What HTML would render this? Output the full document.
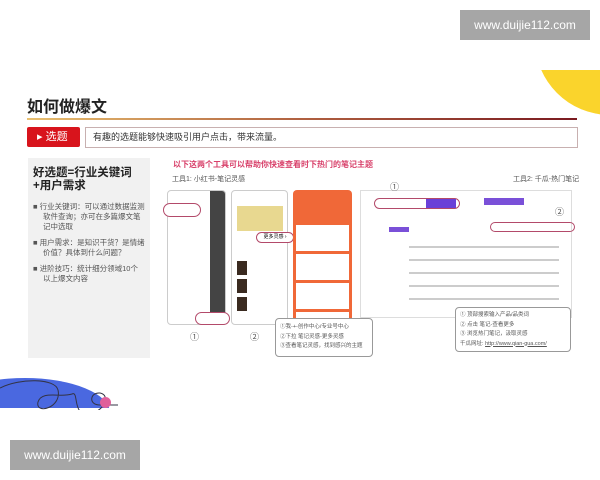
<!DOCTYPE html><html><head><meta charset="utf-8"><style>
*{margin:0;padding:0;box-sizing:border-box}
body{width:600px;height:480px;background:#fff;position:relative;overflow:hidden;font-family:"Liberation Sans","Noto Sans CJK SC",sans-serif}
.a{position:absolute}
.wm{background:#a6a6a6;color:#fff;font-size:12px;text-align:center;line-height:30px;z-index:5}
.s{font-size:5.5px;color:#555;line-height:9.5px;white-space:nowrap}
.ov{border:1.5px solid #b34a6a;border-radius:8px}
</style></head><body>
<div class="a" style="left:0;top:70px;width:600px;height:340px;overflow:hidden"><div class="a" style="left:535px;top:-105px;width:150px;height:150px;border-radius:50%;background:#fad42c"></div></div>
<div class="a wm" style="left:460px;top:10px;width:130px;height:30px">www.duijie112.com</div>
<div class="a" style="left:27px;top:93px;font-size:16px;font-weight:bold;color:#222">如何做爆文</div>
<div class="a" style="left:27px;top:118px;width:550px;height:2px;background:linear-gradient(90deg,#e8c070,#b06040,#7a1a20)"></div>
<div class="a" style="left:27px;top:127px;width:53px;height:20px;background:#d8141c;color:#fff;font-size:11px;line-height:20px;padding-left:10px;border-radius:2px">▸ 选题</div>
<div class="a" style="left:85px;top:127px;width:493px;height:21px;border:1px solid #c8b0b0;font-size:9px;line-height:19px;padding-left:7px;color:#333">有趣的选题能够快速吸引用户点击，带来流量。</div>
<div class="a" style="left:28px;top:158px;width:122px;height:200px;background:#f1f1f1;padding:9px 5px">
<div style="font-size:11.5px;font-weight:bold;color:#222;line-height:13px">好选题=行业关键词+用户需求</div>
<div style="font-size:7.5px;color:#555;line-height:10px;margin-top:9px;padding-left:10px;text-indent:-10px">■ 行业关键词：可以通过数据监测软件查询；亦可在多篇爆文笔记中选取</div>
<div style="font-size:7.5px;color:#555;line-height:10px;margin-top:6px;padding-left:10px;text-indent:-10px">■ 用户需求：是知识干货？是情绪价值？具体到什么问题？</div>
<div style="font-size:7.5px;color:#555;line-height:10px;margin-top:6px;padding-left:10px;text-indent:-10px">■ 进阶技巧：统计细分领域10个以上爆文内容</div>
</div>
<div class="a" style="left:173px;top:159px;font-size:8px;font-weight:bold;color:#d8406a">以下这两个工具可以帮助你快速查看时下热门的笔记主题</div>
<div class="a s" style="left:172px;top:175px;font-size:7px">工具1: 小红书-笔记灵感</div>
<div class="a s" style="left:513px;top:175px;font-size:7px">工具2: 千瓜-热门笔记</div>
<div class="a" style="left:167px;top:190px;width:59px;height:135px;border:1px solid #ccc;border-radius:4px;background:#fff;overflow:hidden"><div class="a" style="right:0;top:0;width:15px;height:135px;background:#444"></div></div>
<div class="a ov" style="left:163px;top:203px;width:38px;height:14px;background:#fff"></div>
<div class="a ov" style="left:195px;top:312px;width:35px;height:13px;background:#fff"></div>
<div class="a" style="left:231px;top:190px;width:57px;height:135px;border:1px solid #ccc;border-radius:4px;background:#fff"><div class="a" style="left:5px;top:15px;width:46px;height:25px;background:#e8d890"></div><div class="a" style="left:5px;top:70px;width:10px;height:50px;background:repeating-linear-gradient(#3a2a20 0 14px,#fff 14px 18px)"></div></div>
<div class="a ov" style="left:256px;top:232px;width:38px;height:11px;background:#fff;font-size:5px;line-height:9px;text-align:center">更多灵感 ›</div>
<div class="a" style="left:293px;top:190px;width:59px;height:135px;border-radius:4px;background:#f06838"><div class="a" style="left:3px;top:35px;width:53px;height:96px;background:repeating-linear-gradient(#fff 0 26px,#f06838 26px 29px)"></div></div>
<div class="a" style="left:360px;top:190px;width:212px;height:128px;border:1px solid #ddd;background:#fff">
<div class="a ov" style="left:13px;top:7px;width:86px;height:11px"></div>
<div class="a" style="left:65px;top:8px;width:30px;height:9px;background:#6a40d8"></div>
<div class="a" style="left:123px;top:7px;width:40px;height:7px;background:#7a50d8"></div>
<div class="a" style="left:28px;top:36px;width:20px;height:5px;background:#7a50d8"></div>
<div class="a" style="left:48px;top:50px;width:150px;height:70px;background:repeating-linear-gradient(#fff 0 5px,#ccc 5px 7px,#fff 7px 13px)"></div>
</div>
<div class="a ov" style="left:490px;top:222px;width:85px;height:10px"></div>
<div class="a" style="left:390px;top:180px;font-size:9px;color:#555">①</div>
<div class="a" style="left:555px;top:205px;font-size:9px;color:#555">②</div>
<div class="a" style="left:190px;top:330px;font-size:9px;color:#555">①</div>
<div class="a" style="left:250px;top:330px;font-size:9px;color:#555">②</div>
<div class="a" style="left:275px;top:318px;width:98px;height:39px;border:1px solid #999;border-radius:4px;background:#fff;padding:4px 4px" ><div class="s">①我-+-创作中心/专业号中心</div><div class="s">②下拉 笔记灵感-更多灵感</div><div class="s">③查看笔记灵感，找到感兴的主题</div></div>
<div class="a" style="left:455px;top:307px;width:116px;height:45px;border:1px solid #999;border-radius:4px;background:#fff;padding:3px 4px"><div class="s">① 顶部搜索输入产品/品类词</div><div class="s">② 点击 笔记-查看更多</div><div class="s">③ 浏览热门笔记，汲取灵感</div><div class="s">千瓜网址: <u>http://www.qian-gua.com/</u></div></div>
<div class="a" style="left:-60px;top:378px;width:170px;height:70px;border-radius:50%;background:#4a68e0;clip-path:inset(0 0 40px 0)"></div>
<svg class="a" style="left:0;top:360px" width="130" height="50"><path d="M0 28 C20 18 55 18 58 30 C62 48 35 55 38 42 C42 30 60 38 72 34 C80 30 70 62 95 52 C105 48 110 35 100 33 C90 32 88 45 100 45 L118 45" fill="none" stroke="#334" stroke-width="1"/></svg>
<div class="a" style="left:100px;top:397px;width:11px;height:11px;border-radius:50%;background:#e0609a"></div>
<div class="a wm" style="left:10px;top:440px;width:130px;height:30px">www.duijie112.com</div>
</body></html>
